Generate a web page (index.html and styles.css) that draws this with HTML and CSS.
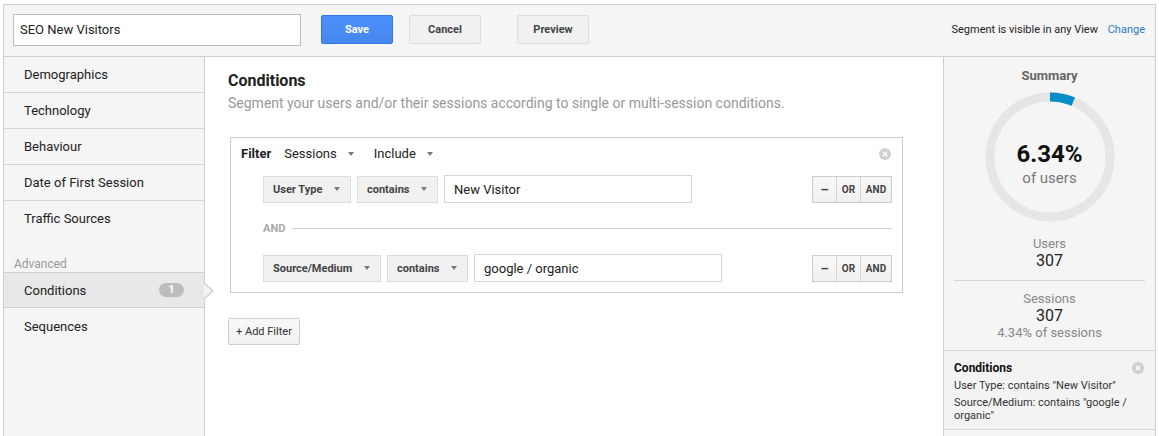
FILE: index.html
```html
<!DOCTYPE html>
<html>
<head>
<meta charset="utf-8">
<title>Segment editor</title>
<link rel="stylesheet" href="styles.css">
</head>
<body>
<div class="app">
  <header class="topbar">
    <input class="name-input" type="text" value="SEO New Visitors">
    <button class="btn btn-primary">Save</button>
    <button class="btn btn-cancel">Cancel</button>
    <button class="btn btn-preview">Preview</button>
    <div class="visibility">Segment is visible in any View <a class="link" href="#">Change</a></div>
  </header>
  <div class="body">
    <nav class="sidebar">
      <div class="nav-item">Demographics</div>
      <div class="nav-item">Technology</div>
      <div class="nav-item">Behaviour</div>
      <div class="nav-item">Date of First Session</div>
      <div class="nav-item last">Traffic Sources</div>
      <div class="nav-label">Advanced</div>
      <div class="nav-item active">Conditions <span class="badge">1</span><span class="pointer"></span></div>
      <div class="nav-item plain">Sequences</div>
    </nav>
    <main class="main">
      <h1 class="title">Conditions</h1>
      <p class="subtitle">Segment your users and/or their sessions according to single or multi-session conditions.</p>
      <section class="filter-box">
        <div class="filter-head">
          <span class="filter-label">Filter</span>
          <span class="dd">Sessions <span class="caret"></span></span>
          <span class="dd">Include <span class="caret"></span></span>
          <span class="spacer"></span>
          <svg class="close" width="12" height="12" viewBox="0 0 12 12"><circle cx="6" cy="6" r="6" fill="#cfcfcf"/><path d="M3.8 3.8 L8.2 8.2 M8.2 3.8 L3.8 8.2" stroke="#fff" stroke-width="1.5"/></svg>
        </div>
        <div class="cond-row">
          <span class="sel w-usertype">User Type <span class="caret"></span></span>
          <span class="sel w-contains">contains <span class="caret"></span></span>
          <input class="val" type="text" value="New Visitor">
          <span class="spacer"></span>
          <div class="seg-group"><span class="seg minus">&ndash;</span><span class="seg or">OR</span><span class="seg and">AND</span></div>
        </div>
        <div class="and-divider"><span>AND</span><span class="rule"></span></div>
        <div class="cond-row">
          <span class="sel w-source">Source/Medium <span class="caret"></span></span>
          <span class="sel w-contains2">contains <span class="caret"></span></span>
          <input class="val" type="text" value="google / organic">
          <span class="spacer"></span>
          <div class="seg-group"><span class="seg minus">&ndash;</span><span class="seg or">OR</span><span class="seg and">AND</span></div>
        </div>
      </section>
      <button class="btn-add">+ Add Filter</button>
    </main>
    <aside class="summary">
      <div class="summary-top">
        <div class="summary-title">Summary</div>
        <div class="donut">
          <svg width="130" height="130" viewBox="0 0 130 130">
            <circle cx="65" cy="65" r="60" fill="none" stroke="#e6e6e6" stroke-width="9"/>
            <circle cx="65" cy="65" r="60" fill="none" stroke="#058dc7" stroke-width="9" stroke-dasharray="23.9 400" transform="rotate(-90 65 65)"/>
          </svg>
          <div class="donut-text">
            <div class="pct">6.34%</div>
            <div class="pct-label">of users</div>
          </div>
        </div>
        <div class="stat first">
          <div class="stat-label">Users</div>
          <div class="stat-value">307</div>
        </div>
        <div class="stat-rule"></div>
        <div class="stat">
          <div class="stat-label">Sessions</div>
          <div class="stat-value">307</div>
          <div class="stat-sub">4.34% of sessions</div>
        </div>
      </div>
      <div class="summary-conds">
        <div class="sc-head"><span class="sc-title">Conditions</span>
          <svg class="close" width="12" height="12" viewBox="0 0 12 12"><circle cx="6" cy="6" r="6" fill="#cfcfcf"/><path d="M3.8 3.8 L8.2 8.2 M8.2 3.8 L3.8 8.2" stroke="#fff" stroke-width="1.5"/></svg>
        </div>
        <div class="sc-line">User Type: contains "New Visitor"</div>
        <div class="sc-line">Source/Medium: contains "google / organic"</div>
      </div>
    </aside>
  </div>
</div>
</body>
</html>
```

FILE: styles.css
```css
* { box-sizing: border-box; }
html, body { margin: 0; padding: 0; background: #fff; }
body { font-family: Roboto, "Liberation Sans", Arial, sans-serif; color: #222; overflow: hidden; }

.app {
  margin: 4px 3px 0 3px;
  border: 1px solid #cfcfcf;
  border-bottom: none;
  height: 432px;
  display: flex;
  flex-direction: column;
}

.topbar {
  height: 52px;
  flex: none;
  background: #f5f5f5;
  border-bottom: 1px solid #cfcfcf;
  display: flex;
  align-items: center;
  padding: 0 10px 2px 9px;
}
.name-input {
  width: 288px;
  height: 32px;
  border: 1px solid #bdbdbd;
  background: #fff;
  font: 13px Roboto, "Liberation Sans", sans-serif;
  color: #222;
  padding: 0 6px;
  margin: 0;
  outline: none;
}
.btn {
  height: 29px;
  width: 72px;
  font: bold 11px Roboto, "Liberation Sans", sans-serif;
  border-radius: 2px;
  padding: 0;
  margin: 0;
}
.btn-primary {
  margin-left: 20px;
  width: 72px;
  color: #fff;
  background: linear-gradient(#4d90fe, #4787ed);
  border: 1px solid #3079ed;
}
.btn-cancel {
  margin-left: 16px;
  color: #444;
  background: #f1f1f1;
  border: 1px solid #dcdcdc;
}
.btn-preview {
  margin-left: 36px;
  color: #444;
  background: #f1f1f1;
  border: 1px solid #dcdcdc;
}
.visibility {
  margin-left: auto;
  font-size: 11px;
  color: #222;
}
.link { color: #2d7bbf; text-decoration: none; margin-left: 7px; }

.body { flex: 1; display: flex; min-height: 0; }

.sidebar {
  width: 201px;
  flex: none;
  background: #f5f5f5;
  border-right: 1px solid #cfcfcf;
}
.nav-item {
  position: relative;
  height: 36px;
  border-bottom: 1px solid #d6d6d6;
  padding-left: 20px;
  display: flex;
  align-items: center;
  font-size: 13px;
  color: #222;
}
.nav-item.last { border-bottom: none; height: 35px; }
.nav-item.plain { border-bottom: none; }
.nav-label {
  margin-top: 21px;
  height: 15px;
  line-height: 15px;
  padding-left: 10px;
  font-size: 12px;
  color: #999;
}
.nav-item.active {
  background: #e8e8e8;
  border-top: 1px solid #d0d0d0;
  border-bottom: 1px solid #d0d0d0;
}
.badge {
  position: absolute;
  left: 155px;
  top: 10px;
  width: 25px;
  height: 14px;
  border-radius: 7px;
  background: #bdbdbd;
  color: #fff;
  font-size: 11px;
  font-weight: bold;
  text-align: center;
  line-height: 14px;
}
.pointer {
  position: absolute;
  right: -10px;
  top: 10px;
  width: 0; height: 0;
  border-top: 8px solid transparent;
  border-bottom: 8px solid transparent;
  border-left: 9px solid #d0d0d0;
}
.pointer::after {
  content: "";
  position: absolute;
  left: -10px;
  top: -7px;
  border-top: 7px solid transparent;
  border-bottom: 7px solid transparent;
  border-left: 8px solid #f3f3f3;
}

.main {
  flex: 1;
  background: #fff;
  border-right: 1px solid #cfcfcf;
  padding: 14px 0 0 23px;
}
.title {
  margin: 0;
  font-size: 16px;
  line-height: 20px;
  font-weight: bold;
  color: #222;
}
.subtitle {
  margin: 4px 0 0 0;
  font-size: 14px;
  line-height: 17px;
  color: #999;
}
.filter-box {
  margin: 25px 0 0 2px;
  width: 673px;
  border: 1px solid #cccccc;
  padding: 8px 10px 10px 10px;
}
.filter-head {
  display: flex;
  align-items: center;
  height: 16px;
  font-size: 13px;
  line-height: 16px;
}
.filter-label { font-weight: bold; color: #222; margin-right: 13px; }
.dd { color: #222; margin-right: 20px; display: inline-flex; align-items: center; }
.dd .caret { margin-left: 11px; }
.spacer { flex: 1; }
.close { display: block; margin-right: 1px; }

.caret {
  display: inline-block;
  width: 0; height: 0;
  border-left: 3.5px solid transparent;
  border-right: 3.5px solid transparent;
  border-top: 4px solid #777;
}

.cond-row {
  display: flex;
  align-items: center;
  margin: 13px 0 0 22px;
  height: 28px;
}
.and-divider + .cond-row { margin-top: 0; }
.sel {
  height: 27px;
  background: #f1f1f1;
  border: 1px solid #dcdcdc;
  font-size: 11px;
  font-weight: bold;
  color: #444;
  padding-left: 9px;
  display: flex;
  align-items: center;
  justify-content: space-between;
  padding-right: 10px;
  margin-right: 6px;
}
.w-usertype { width: 88px; }
.w-contains { width: 81px; }
.w-source { width: 118px; }
.w-contains2 { width: 81px; }
.val {
  width: 248px;
  height: 28px;
  border: 1px solid #d6d6d6;
  font: 13px Roboto, "Liberation Sans", sans-serif;
  color: #222;
  padding: 0 9px;
  margin: 0;
  outline: none;
}
.seg-group {
  display: flex;
  height: 27px;
  border: 1px solid #cccccc;
  background: linear-gradient(#f8f8f8, #f0f0f0);
}
.seg {
  display: flex;
  align-items: center;
  justify-content: center;
  font-size: 10px;
  font-weight: bold;
  color: #444;
}
.seg.minus { width: 24px; border-right: 1px solid #d4d4d4; font-size: 13px; }
.seg.or { width: 24px; border-right: 1px solid #d4d4d4; }
.seg.and { width: 30px; }
.and-divider {
  display: flex;
  align-items: center;
  height: 51px;
  margin-left: 22px;
  font-size: 11px;
  font-weight: bold;
  color: #aaa;
}
.and-divider .rule {
  flex: 1;
  height: 1px;
  background: #cccccc;
  margin-left: 7px;
}
.btn-add {
  margin-top: 25px;
  height: 27px;
  padding: 0 7px;
  background: linear-gradient(#f8f8f8, #f1f1f1);
  border: 1px solid #cccccc;
  border-radius: 2px;
  font: 11px Roboto, "Liberation Sans", sans-serif;
  color: #333;
}

.summary {
  width: 211px;
  flex: none;
  background: #f5f5f5;
  display: flex;
  flex-direction: column;
}
.summary-top {
  padding: 11px 10px 0 10px;
  border-bottom: 1px solid #d6d6d6;
  height: 294px;
  text-align: center;
}
.summary-title {
  font-size: 13px;
  line-height: 16px;
  font-weight: bold;
  color: #666;
}
.donut {
  position: relative;
  width: 130px;
  height: 130px;
  margin: 8px auto 0 auto;
}
.donut svg { display: block; }
.donut-text {
  position: absolute;
  left: 0; right: 0; top: 48px;
  text-align: center;
}
.pct { font-size: 24px; line-height: 28px; font-weight: bold; color: #111; }
.pct-label { font-size: 15px; line-height: 18px; color: #777; margin-top: 1px; }
.stat { text-align: center; }
.stat.first { margin-top: 14px; }
.stat-label { font-size: 13px; line-height: 16px; color: #888; }
.stat-value { font-size: 16px; line-height: 18px; color: #222; }
.stat-sub { font-size: 13px; line-height: 15px; color: #888; }
.stat-rule { height: 1px; background: #d6d6d6; margin: 10px 0 10px 0; }

.summary-conds {
  padding: 9px 10px 7px 10px;
  border-bottom: 1px solid #d6d6d6;
  background: #f3f3f3;
}
.sc-head { display: flex; justify-content: space-between; align-items: center; }
.sc-title { font-size: 12px; line-height: 16px; font-weight: bold; color: #111; }
.sc-line { font-size: 11px; line-height: 13px; color: #333; margin-top: 4px; }
.sc-head + .sc-line { margin-top: 3px; }
```
